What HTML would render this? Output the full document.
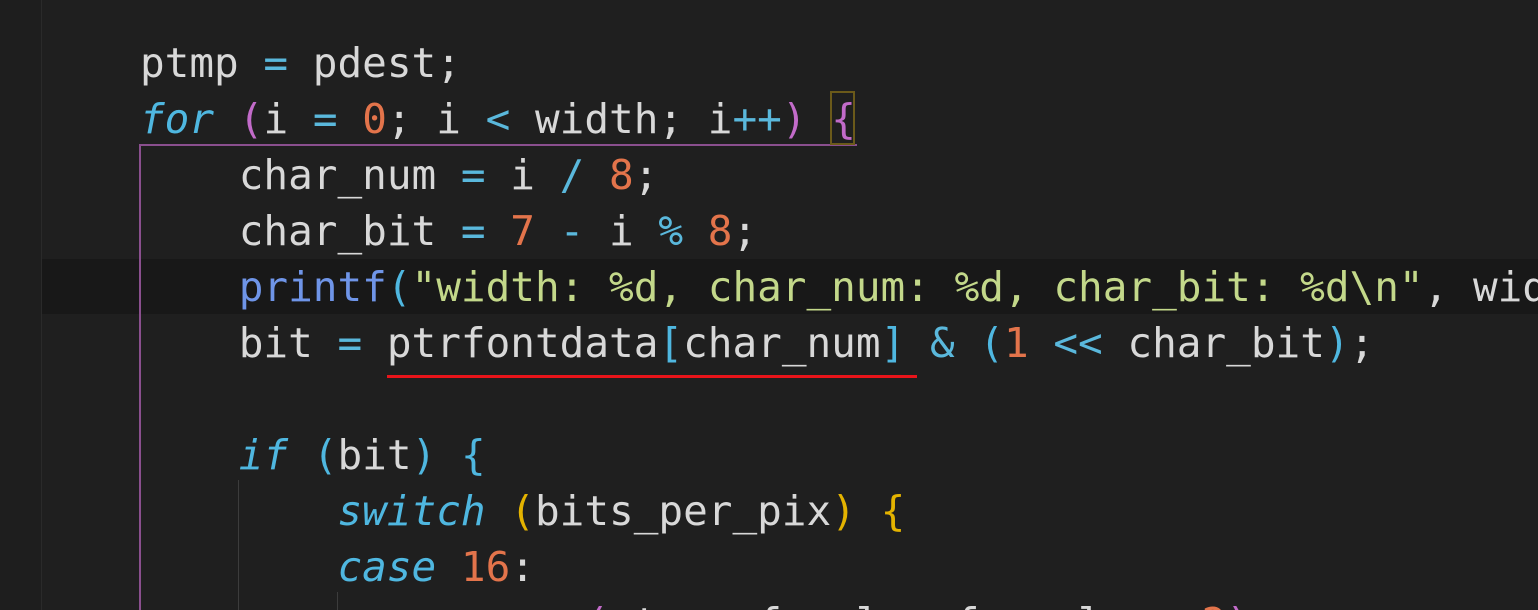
<!DOCTYPE html>
<html style="margin:0;width:1538px;height:610px;overflow:hidden"><head><style>
body{margin:0;width:1538px;height:610px;overflow:hidden;background:#1f1f1f;position:relative;font-family:"DejaVu Sans Mono","Liberation Mono",monospace;}
.gut{position:absolute;left:0;top:0;width:41px;height:610px;background:#1e1e1e;border-right:1px solid #2a2a2a;}
.cur{position:absolute;left:42px;top:259px;width:1496px;height:55px;background:#181818;}
.clip{position:absolute;left:0;top:0;width:1538px;height:610px;overflow:hidden}
.code{position:absolute;left:140px;top:35px;font-size:41px;line-height:56px;color:#d8d8d8;white-space:pre;}
.k{color:#4fb7e0;font-style:italic}
.o{color:#5ab8dc}
.n{color:#e3744b}
.f{color:#6f95e8}
.s{color:#c3d88a}
.p{color:#c26bc9}
.y{color:#e4b300}
.b{color:#4fb7e0}
.box{position:absolute;border:2px solid #8a4f8e;}
</style></head><body>
<div class="clip">
<div class="gut"></div>
<div class="cur"></div>
<div class="box" style="left:139px;top:144px;width:716px;height:464px;border-right:none;border-bottom:none"></div>
<div style="position:absolute;left:830px;top:91px;width:25px;height:54px;border:2px solid #6b5a1a;box-sizing:border-box"></div>
<div style="position:absolute;left:238px;top:480px;width:1px;height:130px;background:#3c3c3c"></div>
<div style="position:absolute;left:337px;top:592px;width:1px;height:18px;background:#3c3c3c"></div>
<div style="position:absolute;left:387px;top:375px;width:530px;height:3px;background:#e8141a"></div>
<div class="code" style="height:575px;overflow:hidden">ptmp <span class="o">=</span> pdest;
<span class="k">for</span> <span class="p">(</span>i <span class="o">=</span> <span class="n">0</span>; i <span class="o">&lt;</span> width; i<span class="o">++</span><span class="p">)</span> <span class="p">{</span>
    char_num <span class="o">=</span> i <span class="o">/</span> <span class="n">8</span>;
    char_bit <span class="o">=</span> <span class="n">7</span> <span class="o">-</span> i <span class="o">%</span> <span class="n">8</span>;
    <span class="f">printf</span><span class="b">(</span><span class="s">"width: %d, char_num: %d, char_bit: %d\n"</span>, wid
    bit <span class="o">=</span> ptrfontdata<span class="b">[</span>char_num<span class="b">]</span> <span class="o">&amp;</span> <span class="b">(</span><span class="n">1</span> <span class="o">&lt;&lt;</span> char_bit<span class="b">)</span>;

    <span class="k">if</span> <span class="b">(</span>bit<span class="b">)</span> <span class="b">{</span>
        <span class="k">switch</span> <span class="y">(</span>bits_per_pix<span class="y">)</span> <span class="y">{</span>
        <span class="k">case</span> <span class="n">16</span>:
            <span class="f">memcpy</span><span class="p">(</span>ptmp, fgcolor<span class="o">+</span>fg_color, <span class="n">2</span><span class="p">)</span>;</div>
</div>
</body></html>
